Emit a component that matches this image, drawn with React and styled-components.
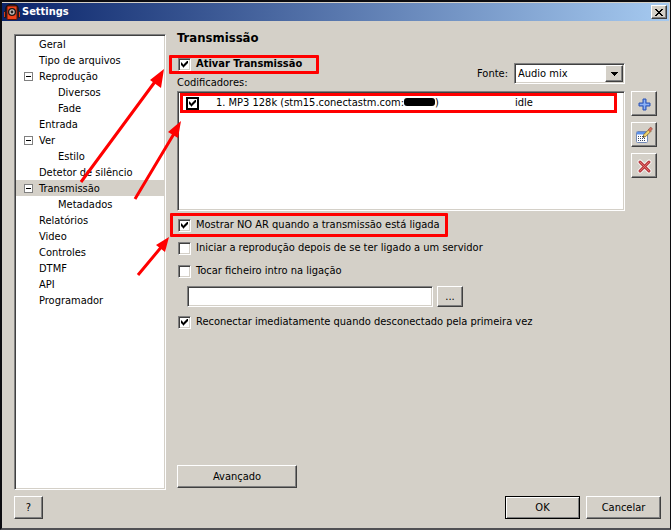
import React, { useState } from "react";
import styled, { createGlobalStyle, css } from "styled-components";

const face = "#d4d0c8";
const red = "#ff0000";

const GlobalStyle = createGlobalStyle`
  * {
    box-sizing: border-box;
  }
  body {
    margin: 0;
    background: ${face};
    color: #000;
  }
  body, button, input, select {
    font-family: "DejaVu Sans Condensed", Tahoma, sans-serif;
    font-size: 11px;
    line-height: 16px;
  }
`;

const raised = css`
  border: 1px solid;
  border-color: #fff #404040 #404040 #fff;
  box-shadow: inset -1px -1px 0 #808080;
`;

const sunken = css`
  border: 1px solid;
  border-color: #808080 #fff #fff #808080;
  box-shadow: inset 1px 1px 0 #404040, inset -1px -1px 0 ${face};
`;

const Window = styled.div`
  position: relative;
  display: flex;
  flex-direction: column;
  min-height: 100vh;
  padding-top: 1px;
  background: ${face};
  border: 2px solid #0c0c10;
  border-right-width: 1px;
  border-bottom-color: #505054;
`;

const TitleBar = styled.header`
  display: flex;
  align-items: center;
  gap: 2px;
  height: 18px;
  margin-right: 1px;
  padding: 0 2px;
  background: linear-gradient(90deg, #0a246a, #a6caf0);
`;

const WindowTitle = styled.h1`
  flex: 1;
  margin: 0;
  color: #fff;
  font-size: 11px;
  line-height: 16px;
`;

const Button = styled.button`
  ${raised}
  display: flex;
  align-items: center;
  justify-content: center;
  flex: none;
  width: ${(p) => p.$width || 75}px;
  height: ${(p) => p.$height || 23}px;
  padding: 0;
  background: ${face};
  color: #000;
  ${(p) =>
    p.$default &&
    css`
      border-color: #000;
      box-shadow: inset 1px 1px 0 #fff, inset -1px -1px 0 #808080;
    `}
`;

const Body = styled.div`
  display: flex;
  flex: 1;
  gap: 11px;
  padding: 9px 13px 6px 12px;
`;

const Tree = styled.ul`
  ${sunken}
  flex: 0 0 152px;
  margin: 4px 0 0;
  padding: 1px;
  background: #fff;
  list-style: none;
`;

const TreeRow = styled.li`
  display: flex;
  align-items: center;
  height: 16px;
  padding-left: ${(p) => (p.$level ? 42 : 8)}px;
  background: ${(p) => (p.$selected ? face : "transparent")};
`;

const Expander = styled.span`
  display: flex;
  flex: none;
  width: 15px;
`;

const TreeItem = styled.button`
  margin-left: ${(p) => (p.$indent ? 15 : 0)}px;
  padding: 1px 0 0;
  border: 0;
  background: none;
  color: #000;
  white-space: nowrap;
`;

const Panel = styled.main`
  display: flex;
  flex: 1;
  flex-direction: column;
  min-width: 0;
  padding-bottom: 2px;
`;

const Encoders = styled.section`
  display: grid;
  grid-template-columns: minmax(0, 1fr) 26px;
  column-gap: 6px;
  margin-bottom: 6px;
`;

const EncodersHead = styled.div`
  display: flex;
  justify-content: space-between;
  align-items: flex-end;
  grid-area: 1 / 1;
`;

const Heading = styled.h2`
  margin: 0 0 10px;
  font-size: 13px;
  line-height: 16px;
`;

const Caption = styled.div`
  margin-top: 3px;
`;

const Source = styled.div`
  display: flex;
  align-items: center;
  gap: 6px;
  margin-bottom: 7px;
`;

const SelectBox = styled.div`
  ${sunken}
  display: grid;
  grid-template-columns: 1fr 18px;
  width: 111px;
  height: 21px;
  padding: 1px;
  background: #fff;
`;

const Select = styled.select`
  grid-area: 1 / 1 / 2 / 3;
  padding: 0 2px;
  border: 0;
  outline: 0;
  appearance: none;
  background: transparent;
  color: #000;
`;

const SelectArrow = styled.span`
  ${raised}
  display: flex;
  align-items: center;
  justify-content: center;
  grid-area: 1 / 2 / 2 / 3;
  background: ${face};
  pointer-events: none;
`;

const ListBox = styled.div`
  ${sunken}
  grid-area: 2 / 1;
  height: 120px;
  padding: 1px 7px 0 2px;
  background: #fff;
`;

const EncoderTable = styled.table`
  width: 100%;
  border-collapse: collapse;
  table-layout: fixed;
  outline: 3px solid ${red};
  outline-offset: -3px;
  td {
    height: 20px;
    padding: 0;
    line-height: 16px;
    white-space: nowrap;
  }
  td:first-child {
    width: 36px;
    padding-left: 6px;
  }
  td:last-child {
    width: 102px;
  }
`;

const Redacted = styled.span`
  display: inline-block;
  width: 31px;
  height: 8px;
  border-radius: 3px;
  background: #000;
`;

const Tools = styled.div`
  display: flex;
  flex-direction: column;
  gap: 6px;
  grid-area: 2 / 2;
`;

const Options = styled.div`
  display: flex;
  flex-direction: column;
  align-items: flex-start;
  gap: 7px;
`;

const CheckRow = styled.label`
  position: relative;
  display: flex;
  align-items: center;
  gap: 5px;
  width: fit-content;
  height: 16px;
  padding-left: 1px;
  font-weight: ${(p) => (p.$bold ? "bold" : "normal")};
  white-space: nowrap;
  ${(p) =>
    p.$marked &&
    css`
      &::after {
        content: "";
        position: absolute;
        inset: ${p.$marked};
        border: 3px solid ${red};
        border-radius: 1px;
      }
    `}
`;

const Checkbox = styled.input.attrs({ type: "checkbox" })`
  ${sunken}
  display: grid;
  place-content: center;
  flex: none;
  width: 13px;
  height: 13px;
  margin: 0;
  appearance: none;
  background: #fff;
  ${(p) => p.$flat && "border: 2px solid #000; box-shadow: none;"}
  &:checked::before {
    content: "";
    width: 7px;
    height: 7px;
    background: #000;
    clip-path: polygon(
      0 2px, 1px 2px, 1px 3px, 2px 3px, 2px 4px, 3px 4px, 3px 3px,
      4px 3px, 4px 2px, 5px 2px, 5px 1px, 6px 1px, 6px 0, 7px 0,
      7px 3px, 6px 3px, 6px 4px, 5px 4px, 5px 5px, 4px 5px, 4px 6px,
      3px 6px, 3px 7px, 2px 7px, 2px 6px, 1px 6px, 1px 5px, 0 5px
    );
  }
`;

const FileRow = styled.div`
  display: flex;
  gap: 4px;
  padding-left: 10px;
`;

const FileInput = styled.input`
  ${sunken}
  width: 246px;
  height: 21px;
  padding: 0 4px;
  background: #fff;
`;

const PanelFooter = styled.div`
  margin-top: auto;
`;

const Footer = styled.footer`
  display: flex;
  gap: 6px;
  padding: 0 9px 9px 12px;
`;

const Spacer = styled.div`
  flex: 1;
`;

const Arrows = styled.svg`
  position: absolute;
  top: -2px;
  left: -2px;
  pointer-events: none;
`;

const AppIcon = () => (
  <svg width="16" height="16" viewBox="0 0 16 16" aria-hidden="true">
    <path d="M2 7V5C2 1.500 4.500.5 8 .5S14 1.500 14 5v2" fill="none" stroke="#111" strokeWidth="1.500" />
    <rect x="3" y="2" width="10" height="13.500" rx="1" fill="#f0441c" stroke="#5a1408" />
    <circle cx="8" cy="8" r="4" fill="#1c1614" />
    <circle cx="8" cy="8" r="2.700" fill="#c9c1bb" />
    <circle cx="8" cy="8" r="1.400" fill="#222" />
    <rect x="0" y="7" width="2.500" height="7" rx="1" fill="#2a1512" />
    <rect x="13.500" y="7" width="2.500" height="7" rx="1" fill="#2a1512" />
    <path d="M.5 8v5M15.500 8v5" stroke="#d33a1a" />
  </svg>
);

const CloseIcon = () => (
  <svg width="8" height="7" viewBox="0 0 8 7" shapeRendering="crispEdges" aria-hidden="true">
    <path d="M0 0h2v1h1v1h2v-1h1v-1h2v1h-1v1h-1v1h-1v1h1v1h1v1h1v1h-2v-1h-1v-1h-2v1h-1v1h-2v-1h1v-1h1v-1h1v-1h-1v-1h-1v-1h-1z" />
  </svg>
);

const MinusIcon = () => (
  <svg width="9" height="9" shapeRendering="crispEdges" aria-hidden="true">
    <rect x=".5" y=".5" width="8" height="8" fill="#fff" stroke="#808080" />
    <path d="M2 4h5v1H2z" />
  </svg>
);

const DownIcon = () => (
  <svg width="7" height="4" shapeRendering="crispEdges" aria-hidden="true">
    <path d="M0 0h7v1H6v1H5v1H4v1H3V3H2V2H1V1H0z" />
  </svg>
);

const PlusIcon = () => (
  <svg width="16" height="16" viewBox="0 0 16 16" aria-hidden="true">
    <path d="M7 3h3v4h4v3h-4v4H7v-4H3V7h4z" fill="#6a94e6" stroke="#2f55b5" />
    <path d="M8.500 4v9M4 8.500h9" stroke="#8fb2f4" />
  </svg>
);

const EditIcon = () => (
  <svg width="18" height="18" viewBox="0 0 18 18" aria-hidden="true">
    <rect x="1.500" y="5.500" width="11" height="11" rx="1" fill="#fff" stroke="#7189b8" />
    <path d="M2 6h10v2.500H2z" fill="#5d91e8" />
    <path d="M3 10.500h8M3 12.500h8M3 14.500h8" stroke="#3d4a66" strokeDasharray="1 1" />
    <path d="M8 11.500l.8-3L14 3.300l2 2-5.200 5.200z" fill="#f1d36c" stroke="#6b5320" strokeWidth=".7" />
    <path d="M13.200 4l1.900-2.500c.8-.7 2.700.9 2 1.900L15 5.800z" fill="#d6705f" stroke="#884238" strokeWidth=".5" />
    <path d="M8 11.500l.4-1.600 1.200 1.200z" fill="#222" />
  </svg>
);

const DeleteIcon = () => (
  <svg width="16" height="16" viewBox="0 0 16 16" aria-hidden="true">
    <path d="M4 4l9 9M13 4l-9 9" stroke="#fff" strokeWidth="5" strokeLinecap="round" opacity=".7" />
    <path d="M4 4l9 9M13 4l-9 9" stroke="#b8343a" strokeWidth="3" strokeLinecap="round" />
    <path d="M4 4l9 9M13 4l-9 9" stroke="#e06c6c" strokeLinecap="round" />
  </svg>
);

const pages = [
  { name: "Geral" },
  { name: "Tipo de arquivos" },
  { name: "Reprodução", open: true },
  { name: "Diversos", level: 1 },
  { name: "Fade", level: 1 },
  { name: "Entrada" },
  { name: "Ver", open: true },
  { name: "Estilo", level: 1 },
  { name: "Detetor de silêncio" },
  { name: "Transmissão", open: true },
  { name: "Metadados", level: 1 },
  { name: "Relatórios" },
  { name: "Video" },
  { name: "Controles" },
  { name: "DTMF" },
  { name: "API" },
  { name: "Programador" },
];

const Check = ({ children, checked = false, ...rest }) => (
  <CheckRow {...rest}>
    <Checkbox defaultChecked={checked} />
    {children}
  </CheckRow>
);

const App = () => {
  const [selected, setSelected] = useState("Transmissão");

  return (
    <Window>
      <GlobalStyle />
      <TitleBar>
        <AppIcon />
        <WindowTitle>Settings</WindowTitle>
        <Button $width={16} $height={14} aria-label="Close">
          <CloseIcon />
        </Button>
      </TitleBar>

      <Body>
        <Tree>
          {pages.map(({ name, level, open }) => (
            <TreeRow key={name} $level={level} $selected={name === selected}>
              {open && (
                <Expander>
                  <MinusIcon />
                </Expander>
              )}
              <TreeItem $indent={!open && !level} onClick={() => setSelected(name)}>
                {name}
              </TreeItem>
            </TreeRow>
          ))}
        </Tree>

        <Panel>
          <Encoders>
            <EncodersHead>
              <div>
                <Heading>Transmissão</Heading>
                <Check checked $bold $marked="-1px -17px -2px -8px">
                  Ativar Transmissão
                </Check>
                <Caption>Codificadores:</Caption>
              </div>
              <Source>
                <label htmlFor="source">Fonte:</label>
                <SelectBox>
                  <Select id="source">
                    <option>Audio mix</option>
                  </Select>
                  <SelectArrow>
                    <DownIcon />
                  </SelectArrow>
                </SelectBox>
              </Source>
            </EncodersHead>
            <ListBox>
              <EncoderTable>
                <tbody>
                  <tr>
                    <td>
                      <Checkbox $flat defaultChecked aria-labelledby="encoder-1" />
                    </td>
                    <td id="encoder-1">
                      1. MP3 128k (stm15.conectastm.com:
                      <Redacted />)
                    </td>
                    <td>idle</td>
                  </tr>
                </tbody>
              </EncoderTable>
            </ListBox>
            <Tools>
              <Button $width={26} $height={25} aria-label="Adicionar">
                <PlusIcon />
              </Button>
              <Button $width={26} $height={25} aria-label="Editar">
                <EditIcon />
              </Button>
              <Button $width={26} $height={25} aria-label="Remover">
                <DeleteIcon />
              </Button>
            </Tools>
          </Encoders>

          <Options>
            <Check checked $marked="-4px -8px -4px -7px">
              Mostrar NO AR quando a transmissão está ligada
            </Check>
            <Check>Iniciar a reprodução depois de se ter ligado a um servidor</Check>
            <Check>Tocar ficheiro intro na ligação</Check>
            <FileRow>
              <FileInput aria-label="Ficheiro intro" />
              <Button $width={26} $height={21}>
                ...
              </Button>
            </FileRow>
            <Check checked>Reconectar imediatamente quando desconectado pela primeira vez</Check>
          </Options>

          <PanelFooter>
            <Button $width={120}>Avançado</Button>
          </PanelFooter>
        </Panel>
      </Body>

      <Footer>
        <Button $width={29}>?</Button>
        <Spacer />
        <Button $default>OK</Button>
        <Button>Cancelar</Button>
      </Footer>

      <Arrows width="200" height="290" fill={red} stroke={red} strokeWidth="3" aria-hidden="true">
        <path d="M81 182L157 79M135 199L175 132M138 275L163 245" />
        <path d="M164 69L161 88L150 80ZM181 121L178 138L168 132ZM169 237L165 252L156 245Z" stroke="none" />
      </Arrows>
    </Window>
  );
};

export default App;
